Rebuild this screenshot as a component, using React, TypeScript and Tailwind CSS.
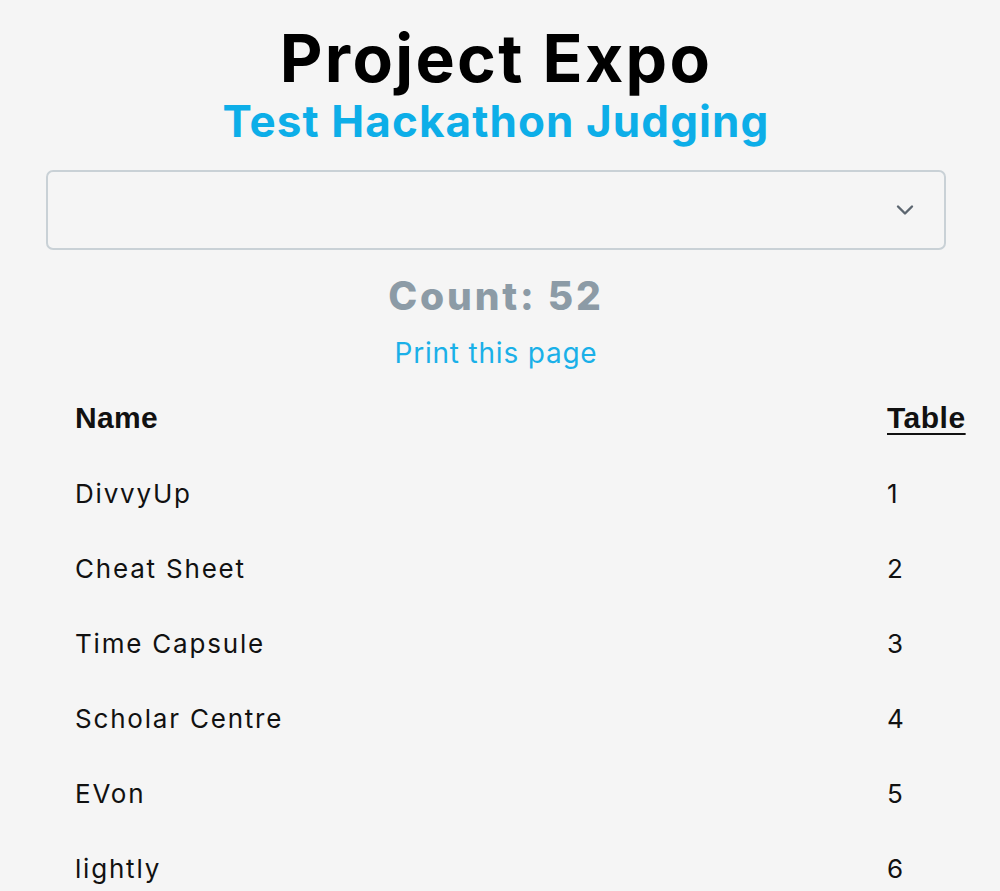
import React from "react";

const rows = [
  ["DivvyUp", "1"],
  ["Cheat Sheet", "2"],
  ["Time Capsule", "3"],
  ["Scholar Centre", "4"],
  ["EVon", "5"],
  ["lightly", "6"],
];

const arial = { fontFamily: "'Liberation Sans', Arial, sans-serif" };

export default function App() {
  return (
    <div className="min-h-[891px] bg-[#f5f5f5] overflow-hidden" style={{ fontFamily: "Inter, 'Noto Sans', sans-serif" }}>
      <div className="flex flex-col items-center pt-[18px] pr-[8px]">
        <h1 className="text-[66px] leading-[80px] font-bold text-black tracking-[2.3px]">Project Expo</h1>
        <h2 className="text-[44px] leading-[50px] font-bold text-[#0daee8] -mt-[2px] tracking-[1.1px]">Test Hackathon Judging</h2>
        <div className="mt-[24px] w-[900px] h-[80px] border-2 border-[#c9d1d6] rounded-[7px] flex items-center justify-end pr-[28px]">
          <svg width="22" height="14" viewBox="0 0 22 14" fill="none">
            <path d="M4 3.5 L11 10.5 L18 3.5" stroke="#5c6670" strokeWidth="2.4" strokeLinecap="round" strokeLinejoin="round" />
          </svg>
        </div>
        <div className="mt-[20px] text-[39px] leading-[52px] font-extrabold text-[#8c9ba6] tracking-[2.8px]">Count: 52</div>
        <a className="mt-[13px] text-[28px] leading-[36px] text-[#1ab0e8] cursor-pointer tracking-[0.8px]">Print this page</a>
      </div>
      <table className="ml-[50px] mt-[9px] w-[916px] border-collapse text-[26px] text-[#111] tracking-[1.8px]">
        <thead>
          <tr className="h-[75px]">
            <th className="text-left pl-[25px] font-bold text-[30px] tracking-[0.3px]" style={arial}>Name</th>
            <th className="text-left w-[79px] font-bold text-[30px] tracking-[0.5px] underline underline-offset-[5px] decoration-2" style={arial}>Table</th>
          </tr>
        </thead>
        <tbody>
          {rows.map(([n, t]) => (
            <tr key={t} className="h-[75px]">
              <td className="pl-[25px] pt-[2px]">{n}</td>
              <td className="w-[79px] text-left pt-[2px]">{t}</td>
            </tr>
          ))}
        </tbody>
      </table>
    </div>
  );
}
